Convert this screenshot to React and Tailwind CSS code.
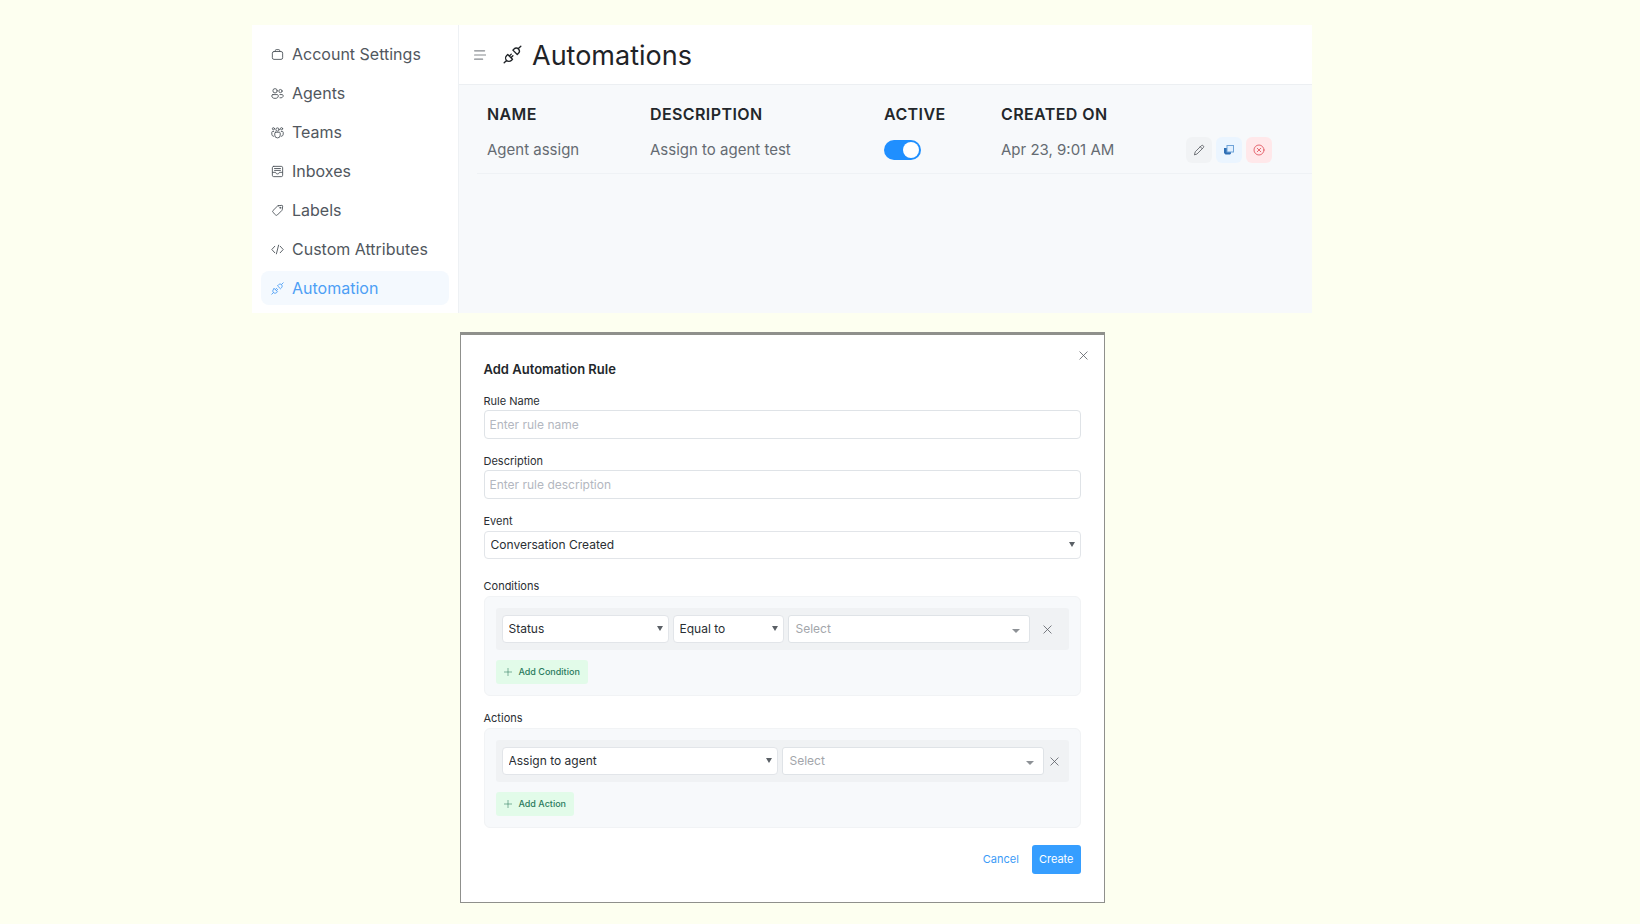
import { useState } from 'react';

const strokeProps = {
  fill: 'none',
  stroke: 'currentColor',
  strokeWidth: 1.7,
  strokeLinecap: 'round',
  strokeLinejoin: 'round',
};

function Icon({ name, className }) {
  return (
    <svg viewBox="0 0 24 24" className={className} aria-hidden="true" {...strokeProps}>
      {name === 'briefcase' && (
        <>
          <rect x="2.5" y="6.5" width="19" height="14.5" rx="3" />
          <path d="M8 6.5v-2C8 3.600 8.600 3 9.500 3h5c.9 0 1.500.6 1.500 1.500v2" />
        </>
      )}
      {name === 'people' && (
        <>
          <circle cx="7.5" cy="7" r="4" />
          <circle cx="17.5" cy="7.500" r="3" />
          <path d="M3.500 14h8c1.100 0 2 .9 2 2v.5c0 3-2.500 4.500-6 4.500s-6-1.500-6-4.500V16c0-1.100.9-2 2-2zM16.500 14h4c1.100 0 2 .9 2 2 0 3-2.500 4.500-6 4" />
        </>
      )}
      {name === 'team' && (
        <>
          <circle cx="12" cy="6.500" r="3" />
          <circle cx="4.500" cy="5" r="2" />
          <circle cx="19.500" cy="5" r="2" />
          <path d="M8.500 11.500h7c.8 0 1.500.7 1.500 1.500v4a5 5 0 0 1-10 0v-4c0-.8.7-1.500 1.500-1.500zM5 10H3c-.8 0-1.500.7-1.500 1.500V15c0 2.500 1.500 4 3.500 4M19 10h2c.8 0 1.500.7 1.500 1.500V15c0 2.500-1.500 4-3.500 4" />
        </>
      )}
      {name === 'inbox' && (
        <>
          <rect x="2.500" y="2.500" width="19" height="19" rx="2.500" />
          <path d="M3 13.500h5.500c.5 4 6.500 4 7 0H21M6.500 6.500h11M6.500 10h11" />
        </>
      )}
      {name === 'tag' && (
        <>
          <path d="M13.500 3.200 20 2.500c1 0 1.500.5 1.500 1.500l-.7 6.500c-.1.600-.3 1-.7 1.400l-8.400 8.400c-.9.900-2.200.9-3.100 0l-5-5c-.9-.9-.9-2.200 0-3.100l8.400-8.400c.4-.4.900-.6 1.500-.6z" />
          <circle cx="17" cy="7" r="1" />
        </>
      )}
      {name === 'code' && <path d="m7 6-5.500 6L7 18M17 6l5.500 6-5.500 6M14 4l-4 16" />}
      {name === 'plug' && (
        <path d="m22.500 1.500-3 3M12.500 6.500l1.500-1.500c1.600-1.600 4-1.600 5.500 0s1.500 4 0 5.500L18 12zM1.500 22.500l3-3M6 12l6 6-1.500 1.500c-1.600 1.600-4.400 1.600-6 0s-1.600-4.400 0-6zM10.500 11.500 8 14M12.500 13.500 10 16" />
      )}
      {name === 'pencil' && <path d="m3 21 1.500-5.500L16.500 3.500a2.500 2.500 0 0 1 4 4L8.500 19.500zM14.500 5.500l4 4" />}
      {name === 'close' && <path d="m4 4 16 16M20 4 4 20" />}
      {name === 'dismiss' && (
        <>
          <circle cx="12" cy="12" r="10" />
          <path d="m8.500 8.500 7 7M15.500 8.500l-7 7" />
        </>
      )}
      {name === 'plus' && <path d="M12 1v22M1 12h22" />}
    </svg>
  );
}

const navItems = [
  { label: 'Account Settings', icon: 'briefcase' },
  { label: 'Agents', icon: 'people' },
  { label: 'Teams', icon: 'team' },
  { label: 'Inboxes', icon: 'inbox' },
  { label: 'Labels', icon: 'tag' },
  { label: 'Custom Attributes', icon: 'code' },
  { label: 'Automation', icon: 'plug', active: true },
];

function Sidebar() {
  return (
    <nav className="w-[207px] shrink-0 border-r border-[#eef1f4] bg-white px-[9px] pt-3 pb-2">
      <ul className="flex flex-col gap-[5px]">
        {navItems.map((item) => (
          <li key={item.label}>
            <a
              href="#"
              className={`flex h-[34px] items-center gap-2 rounded-lg px-[10px] text-base ${
                item.active ? 'bg-[#f4f9fe] text-[#4d9ff5]' : 'text-[#51575e]'
              }`}
            >
              <Icon name={item.icon} className="size-[13px] shrink-0" />
              <span className="whitespace-nowrap">{item.label}</span>
            </a>
          </li>
        ))}
      </ul>
    </nav>
  );
}

function AutomationsTable() {
  const [enabled, setEnabled] = useState(true);

  return (
    <div className="pt-4 pl-[18px]">
      <table className="w-full table-fixed text-left">
        <colgroup>
          <col className="w-[173px]" />
          <col className="w-[234px]" />
          <col className="w-[117px]" />
          <col className="w-[185px]" />
          <col />
        </colgroup>
        <thead>
          <tr className="h-[26px] text-base tracking-wide text-[#23272b]">
            <th className="pl-[10px] font-semibold">NAME</th>
            <th className="font-semibold">DESCRIPTION</th>
            <th className="font-semibold">ACTIVE</th>
            <th className="font-semibold">CREATED ON</th>
            <th aria-label="Actions" />
          </tr>
        </thead>
        <tbody>
          <tr className="h-[46px] border-b border-[#eff2f5] text-[15px] text-[#656b72]">
            <td className="pl-[10px]">Agent assign</td>
            <td>Assign to agent test</td>
            <td>
              <button
                type="button"
                role="switch"
                aria-checked={enabled}
                aria-label="Active"
                onClick={() => setEnabled(!enabled)}
                className={`flex h-5 w-[37px] items-center rounded-full px-[2px] ${
                  enabled ? 'justify-end bg-[#1f8fff]' : 'justify-start bg-[#c5cdd6]'
                }`}
              >
                <span className="size-4 rounded-full bg-white" />
              </button>
            </td>
            <td>Apr 23, 9:01 AM</td>
            <td>
              <div className="flex gap-1">
                <button
                  type="button"
                  aria-label="Edit"
                  className="flex size-[26px] items-center justify-center rounded-md bg-[#f1f3f5] text-[#5c6066]"
                >
                  <Icon name="pencil" className="size-3" />
                </button>
                <button
                  type="button"
                  aria-label="Clone"
                  className="flex size-[26px] items-center justify-center rounded-md bg-[#ebf5ff]"
                >
                  <svg viewBox="0 0 10 10" className="size-[10px]" aria-hidden="true">
                    <path d="M0 3h3v4h4v1.500L6 9.500H1.500L0 8z" fill="#2f6fb5" />
                    <rect x="3" y=".5" width="6.500" height="6.500" fill="#e2f0ff" stroke="#6fa3d8" />
                  </svg>
                </button>
                <button
                  type="button"
                  aria-label="Delete"
                  className="flex size-[26px] items-center justify-center rounded-md bg-[#ffe8ea] text-[#e0525c]"
                >
                  <Icon name="dismiss" className="size-3" />
                </button>
              </div>
            </td>
          </tr>
        </tbody>
      </table>
    </div>
  );
}

function NativeSelect({ label, id, options, className = '' }) {
  return (
    <div className={`relative ${className}`}>
      <select
        id={id}
        aria-label={label}
        className="block h-[28px] w-full appearance-none rounded border border-[#e2e5e9] bg-white px-[6px] text-xs text-[#2a2e33]"
      >
        {options.map((option) => (
          <option key={option}>{option}</option>
        ))}
      </select>
      <svg
        viewBox="0 0 6 5"
        className="pointer-events-none absolute top-[11px] right-[6px] h-[5px] w-[6px] fill-[#5b6066]"
        aria-hidden="true"
      >
        <path d="M0 0h6L3 5z" />
      </svg>
    </div>
  );
}

function MultiSelect({ label, className }) {
  return (
    <button
      type="button"
      aria-label={label}
      className={`flex h-[28px] items-center justify-between rounded-[3px] border border-[#dfe3e7] bg-white pr-[9px] pl-[7px] text-xs text-[#a3a6ab] ${className}`}
    >
      Select
      <svg viewBox="0 0 8 4" className="mt-1 h-1 w-2 fill-[#8d9196]" aria-hidden="true">
        <path d="M0 0h8L4 4z" />
      </svg>
    </button>
  );
}

function AddButton({ children }) {
  return (
    <button
      type="button"
      className="flex h-6 items-center gap-[7px] rounded-[3px] bg-[#e2fbe9] px-2 text-[9px] font-medium text-[#2b7a5d]"
    >
      <Icon name="plus" className="size-2" />
      {children}
    </button>
  );
}

function TextField({ id, label, placeholder }) {
  return (
    <div>
      <label htmlFor={id} className="block h-[18px] text-[11px] leading-[18px] text-[#2a2e33]">
        {label}
      </label>
      <input
        id={id}
        type="text"
        placeholder={placeholder}
        className="block h-[29px] w-full rounded border border-[#dfe3e7] bg-white px-[5px] text-xs placeholder:text-[#b3b7c0]"
      />
    </div>
  );
}

function RuleModal() {
  return (
    <form
      role="dialog"
      aria-labelledby="rule-title"
      className="relative w-full max-w-[645px] border border-t-[3px] border-[#8f908c] bg-white px-[23px] pt-6 pb-7"
    >
      <button type="button" aria-label="Close" className="absolute top-[15px] right-[15px] text-[#55595f]">
        <Icon name="close" className="size-[11px]" />
      </button>
      <h2 id="rule-title" className="text-[13px] leading-5 font-semibold text-[#23272b]">
        Add Automation Rule
      </h2>

      <div className="mt-[13px] flex flex-col gap-[13px]">
        <TextField id="rule-name" label="Rule Name" placeholder="Enter rule name" />
        <TextField id="rule-description" label="Description" placeholder="Enter rule description" />
        <div>
          <label htmlFor="rule-event" className="block h-[19px] text-[11px] leading-[18px] text-[#2a2e33]">
            Event
          </label>
          <NativeSelect id="rule-event" options={['Conversation Created', 'Conversation Updated', 'Message Created']} />
        </div>
      </div>

      <section className="mt-[18px]">
        <h3 className="h-[19px] text-[11px] leading-[18px] text-[#2a2e33]">Conditions</h3>
        <div className="rounded-md border border-[#f1f3f5] bg-[#f7f9fb] p-[11px]">
          <div className="flex items-center gap-1 rounded-[3px] bg-[#f0f2f4] py-[7px] pr-[7px] pl-[6px]">
            <NativeSelect label="Condition" options={['Status', 'Browser Language', 'Country']} className="w-[167px]" />
            <NativeSelect label="Operator" options={['Equal to', 'Not equal to']} className="w-[111px]" />
            <MultiSelect label="Condition value" className="flex-1" />
            <button type="button" aria-label="Remove condition" className="flex w-7 justify-center text-[#55595f]">
              <Icon name="close" className="size-[11px]" />
            </button>
          </div>
          <div className="mt-[10px]">
            <AddButton>Add Condition</AddButton>
          </div>
        </div>
      </section>

      <section className="mt-[13px]">
        <h3 className="h-[19px] text-[11px] leading-[18px] text-[#2a2e33]">Actions</h3>
        <div className="rounded-md border border-[#f1f3f5] bg-[#f7f9fb] p-[11px]">
          <div className="flex items-center gap-1 rounded-[3px] bg-[#f0f2f4] py-[7px] pr-[7px] pl-[6px]">
            <NativeSelect label="Action" options={['Assign to agent', 'Assign a team', 'Add a label']} className="w-[276px]" />
            <MultiSelect label="Action value" className="flex-1" />
            <button type="button" aria-label="Remove action" className="flex w-[14px] justify-center text-[#55595f]">
              <Icon name="close" className="size-[11px]" />
            </button>
          </div>
          <div className="mt-[10px]">
            <AddButton>Add Action</AddButton>
          </div>
        </div>
      </section>

      <div className="mt-[17px] flex items-center justify-end gap-[13px] text-[11px]">
        <button type="button" className="text-[#3b9bf7]">
          Cancel
        </button>
        <button type="submit" className="h-[29px] rounded-[3px] bg-[#369eff] px-[7px] text-white">
          Create
        </button>
      </div>
    </form>
  );
}

export default function App() {
  return (
    <div className="flex min-h-screen flex-col items-center gap-[19px] bg-[#fdfff0] pt-[25px] pr-[76px] pb-5 font-['Inter',sans-serif]">
      <div className="flex w-full max-w-[1060px] bg-white">
        <Sidebar />
        <main className="flex min-w-0 flex-1 flex-col bg-[#f7f9fb]">
          <header className="flex h-[60px] items-center border-b border-[#eceff2] bg-white pl-[15px]">
            <button type="button" aria-label="Toggle sidebar" className="text-[#85898e]">
              <svg viewBox="0 0 12 10" className="h-[10px] w-3" aria-hidden="true" {...strokeProps} strokeWidth="1.2">
                <path d="M.6.8h10M.6 5h11M.6 9.200h8" />
              </svg>
            </button>
            <h1 className="ml-[17px] flex items-center gap-[10px] text-[27px] text-[#1f2327]">
              <Icon name="plug" className="size-[19px]" />
              <span className="pt-1">Automations</span>
            </h1>
          </header>
          <AutomationsTable />
        </main>
      </div>
      <RuleModal />
    </div>
  );
}
